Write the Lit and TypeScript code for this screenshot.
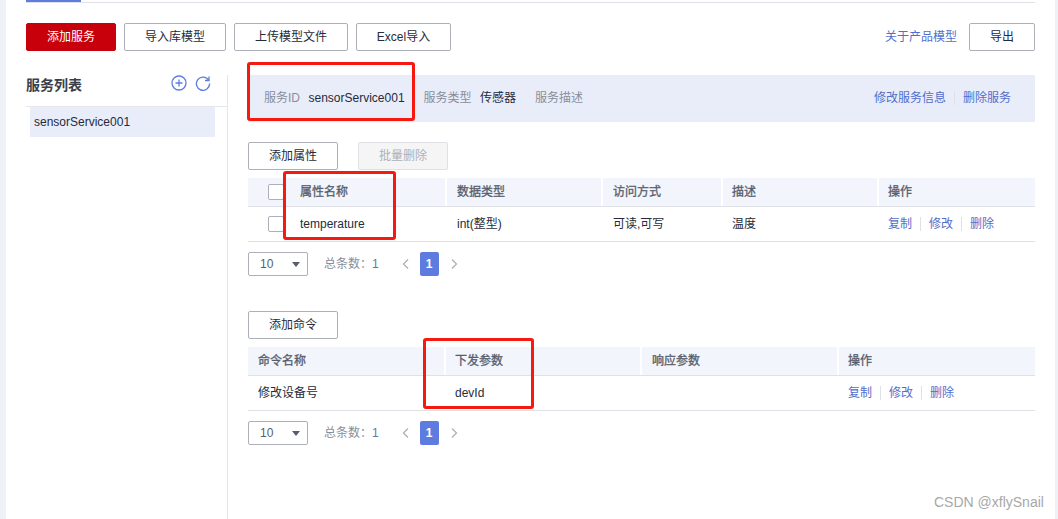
import { LitElement, html, css, svg } from "lit";
import { customElement } from "lit/decorators.js";

@customElement("app-root")
export class AppRoot extends LitElement {
  static styles = css`
    :host { display: block; position: relative; width: 1058px; height: 519px; overflow: hidden; background: #f0f0f7; font-family: "Liberation Sans", "Noto Sans CJK SC", sans-serif; font-size: 12px; line-height: 16px; color: #252b3a; }
    .panel { box-sizing: border-box; margin-left: 6px; width: 1049px; height: 519px; background: #fff; padding: 0 20px; }
    .tabs { height: 3px; box-sizing: border-box; border-bottom: 1px solid #dfe1e6; }
    .tab { width: 55px; height: 2px; background: #5e7ce0; }
    .toolbar { display: flex; align-items: center; gap: 8px; margin-top: 20px; height: 28px; }
    .btn { box-sizing: border-box; height: 28px; display: flex; align-items: center; justify-content: center; background: #fff; border: 1px solid #adb0b8; border-radius: 2px; color: #252b3a; }
    .btn.primary { background: #c7000b; border-color: #c7000b; color: #fff; }
    .btn.disabled { background: #f5f5f6; border-color: #dfe1e6; color: #adb0b8; }
    .w90 { width: 90px; }
    .w102 { width: 102px; }
    .w114 { width: 114px; }
    .w95 { width: 95px; }
    .w66 { width: 66px; }
    .spacer { flex: 1; }
    .link { color: #526ecc; }
    .about { margin-right: 4px; }
    .columns { display: flex; margin-top: 24px; height: 444px; }
    .side { box-sizing: border-box; width: 202px; border-right: 1px solid #e6e6ea; }
    .side-head { box-sizing: border-box; height: 32px; border-bottom: 1px solid #e6e6ea; display: flex; align-items: flex-start; justify-content: space-between; padding: 0 16px 0 0; }
    .side-title { font-size: 14px; line-height: 20px; font-weight: bold; color: #3b3f4a; }
    .icons { display: flex; gap: 8px; align-items: center; }
    .side-item { box-sizing: border-box; margin-left: 4px; width: 185px; height: 30px; background: #e9edfa; line-height: 30px; padding-left: 4px; }
    .main { margin-left: 20px; width: 787px; }
    .info { box-sizing: border-box; height: 47px; background: #e9edfa; display: flex; align-items: center; padding: 0 24px 2px 16px; }
    .lbl { color: #8a8e99; margin-right: 8.5px; }
    .val { margin-right: 19px; }
    .sep { width: 1px; height: 14px; background: #dfe1e6; margin: 0 8px; }
    .row-btns { display: flex; gap: 20px; margin-top: 20px; }
    .table { margin-top: 8px; }
    .tr { display: grid; align-items: center; }
    .t1 { grid-template-columns: 199px 156px 120px 156px 156px; }
    .t2 { grid-template-columns: 198px 196px 197px 196px; }
    .thead { height: 29px; background: #f2f5fc; border-bottom: 1px solid #dfe1e6; box-sizing: border-box; color: #575d6c; -webkit-text-stroke: 0.3px #575d6c; }
    .tbody { height: 35px; box-sizing: border-box; border-bottom: 1px solid #dfe1e6; }
    .cell { box-sizing: border-box; padding-left: 10px; height: 100%; display: flex; align-items: center; }
    .thead .cell { height: 28px; border-right: 2px solid #fff; }
    .thead .cell:last-child { border-right: none; }
    .cell.first1 { padding-left: 20px; }
    .cell.tight { padding-left: 9px; }
    .check { box-sizing: border-box; width: 16px; height: 16px; border: 1px solid #adb0b8; border-radius: 2px; background: #fff; margin-right: 16px; flex: none; }
    .ops { display: flex; align-items: center; }
    .pager { display: flex; align-items: center; height: 24px; margin-top: 10px; }
    .select { box-sizing: border-box; width: 60px; height: 24px; border: 1px solid #adb0b8; border-radius: 2px; display: flex; align-items: center; justify-content: space-between; padding: 0 7px 0 11px; color: #575d6c; }
    .caret { width: 0; height: 0; border-left: 4px solid transparent; border-right: 4px solid transparent; border-top: 5px solid #575d6c; }
    .total { margin-left: 16px; color: #8a8e99; }
    .total b { font-weight: 400; color: #5b7aa8; }
    .chev { margin-left: 23px; display: flex; }
    .chev.next { margin-left: 11px; }
    .page { margin-left: 10px; width: 19px; height: 24px; border-radius: 2px; background: #5e7ce0; color: #fff; display: flex; align-items: center; justify-content: center; font-weight: bold; }
    .second { margin-top: 35px; }
    .mark { position: absolute; box-sizing: border-box; border: 3px solid #f5190f; border-radius: 3px; }
    .m1 { left: 247px; top: 62px; width: 168px; height: 59px; }
    .m2 { left: 283px; top: 171px; width: 113px; height: 69px; }
    .m3 { left: 423px; top: 338px; width: 111px; height: 71px; }
    .watermark { position: absolute; left: 934px; top: 494px; font-size: 14px; color: #a8a8a8; }
  `;

  private ops() {
    return html`<div class="ops link"><span>复制</span><i class="sep"></i><span>修改</span><i class="sep"></i><span>删除</span></div>`;
  }

  private pager() {
    const chev = (d: string) => svg`<svg width="8" height="12" viewBox="0 0 8 12"><path d="${d}" fill="none" stroke="#adb0b8" stroke-width="1.3"/></svg>`;
    return html`<div class="pager">
      <div class="select"><span>10</span><i class="caret"></i></div>
      <div class="total">总条数：<b>1</b></div>
      <div class="chev">${chev("M6 1.5 L1.5 6 L6 10.5")}</div>
      <div class="page">1</div>
      <div class="chev next">${chev("M2 1.5 L6.5 6 L2 10.5")}</div>
    </div>`;
  }

  render() {
    return html`
      <div class="panel">
        <div class="tabs"><div class="tab"></div></div>
        <div class="toolbar">
          <div class="btn primary w90">添加服务</div>
          <div class="btn w102">导入库模型</div>
          <div class="btn w114">上传模型文件</div>
          <div class="btn w95">Excel导入</div>
          <div class="spacer"></div>
          <span class="link about">关于产品模型</span>
          <div class="btn w66">导出</div>
        </div>
        <div class="columns">
          <div class="side">
            <div class="side-head">
              <span class="side-title">服务列表</span>
              <div class="icons">
                <svg width="16" height="16" viewBox="0 0 16 16" fill="none" stroke="#5e7ce0" stroke-width="1.3"><circle cx="8" cy="8" r="7"/><path d="M8 4.5v7M4.5 8h7"/></svg>
                <svg width="16" height="16" viewBox="0 0 16 16" fill="none" stroke="#5e7ce0" stroke-width="1.4"><path d="M13.6 5.2A6.6 6.6 0 1 0 14.6 8.5"/><path d="M14 1.5v4h-4" stroke-width="1.3"/></svg>
              </div>
            </div>
            <div class="side-item">sensorService001</div>
          </div>
          <div class="main">
            <div class="info">
              <span class="lbl">服务ID</span><span class="val">sensorService001</span>
              <span class="lbl">服务类型</span><span class="val">传感器</span>
              <span class="lbl">服务描述</span>
              <div class="spacer"></div>
              <span class="link">修改服务信息</span><i class="sep"></i><span class="link">删除服务</span>
            </div>
            <div class="row-btns">
              <div class="btn w90">添加属性</div>
              <div class="btn disabled w90">批量删除</div>
            </div>
            <div class="table">
              <div class="tr t1 thead">
                <div class="cell first1"><i class="check"></i>属性名称</div>
                <div class="cell">数据类型</div>
                <div class="cell">访问方式</div>
                <div class="cell tight">描述</div>
                <div class="cell tight">操作</div>
              </div>
              <div class="tr t1 tbody">
                <div class="cell first1"><i class="check"></i>temperature</div>
                <div class="cell">int(整型)</div>
                <div class="cell">可读,可写</div>
                <div class="cell tight">温度</div>
                <div class="cell tight">${this.ops()}</div>
              </div>
            </div>
            ${this.pager()}
            <div class="second">
              <div class="btn w90">添加命令</div>
              <div class="table">
                <div class="tr t2 thead">
                  <div class="cell">命令名称</div>
                  <div class="cell tight">下发参数</div>
                  <div class="cell">响应参数</div>
                  <div class="cell tight">操作</div>
                </div>
                <div class="tr t2 tbody">
                  <div class="cell">修改设备号</div>
                  <div class="cell tight">devId</div>
                  <div class="cell"></div>
                  <div class="cell tight">${this.ops()}</div>
                </div>
              </div>
              ${this.pager()}
            </div>
          </div>
        </div>
      </div>
      <div class="mark m1"></div>
      <div class="mark m2"></div>
      <div class="mark m3"></div>
      <div class="watermark">CSDN @xflySnail</div>
    `;
  }
}
